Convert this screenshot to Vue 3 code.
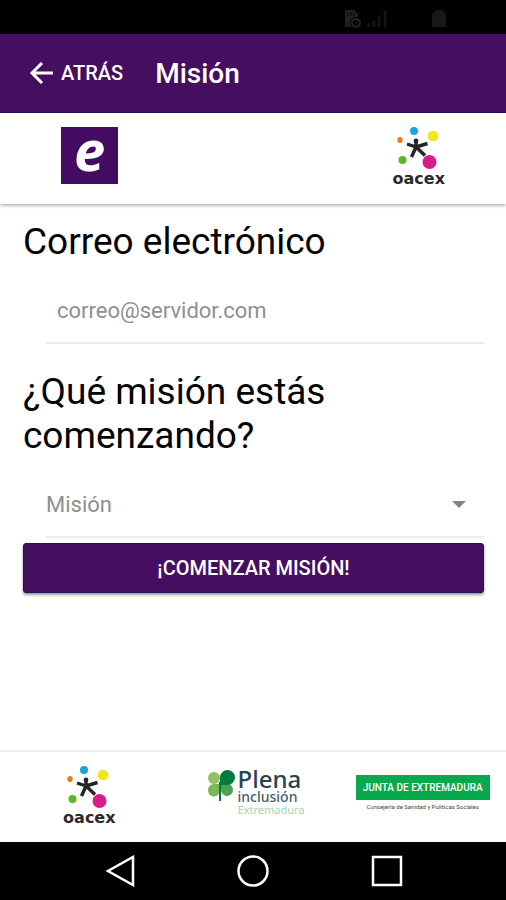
<script setup>
import {ref} from 'vue';

const correo = ref('')
const mision = ref('')
</script>

<template>
  <div class="screen">

    <!-- oacex star, shared by the top bar and the footer -->
    <svg class="defs" aria-hidden="true">
      <symbol id="oacex-mark" viewBox="0 0 44 44">
        <circle cx="17" cy="6" r="4" fill="#1ba3df" />
        <circle cx="36" cy="11" r="5.300" fill="#f0e61a" />
        <ellipse cx="3" cy="15" rx="2.700" ry="3" fill="#ea7a1c" />
        <circle cx="5.500" cy="35" r="4" fill="#5cb61f" />
        <circle cx="32.500" cy="37" r="7" fill="#d91c8c" />
        <circle cx="19" cy="16" r="2.400" fill="#242424" />
        <path d="M19 16V24M19 22L10 19M19 22L30.500 18.500M19 22L14.500 32M19 22L28 30.500" fill="none" stroke="#242424" stroke-width="3.400" />
      </symbol>
    </svg>

    <div class="status">
      <svg width="106" height="20" viewBox="0 0 106 20" aria-hidden="true">
        <path d="M1 2H10L14 6V9A6 6 0 0 0 8 19H1Z" fill="#202020" />
        <path d="M4 4V8M7 4V8M10 4V8" stroke="#080808" />
        <circle cx="12" cy="15" r="4" fill="none" stroke="#242424" stroke-width="2" />
        <path d="M9 18L15 12" stroke="#242424" />
        <path d="M25 19V15M30 19V12M35 19V8M41 19V3" stroke="#131313" stroke-width="3" />
        <path d="M88 6L92 2H98L102 6V19H88Z" fill="#181818" />
      </svg>
    </div>

    <header class="toolbar">
      <button type="button" class="back">
        <svg width="24" height="24" viewBox="0 0 24 24" aria-hidden="true">
          <path d="M24 12H3M13 2L3 12L13 22" fill="none" stroke="currentColor" stroke-width="3" />
        </svg>
        <span>ATRÁS</span>
      </button>
      <h1>Misión</h1>
    </header>

    <div class="logos">
      <div class="e-logo">e</div>
      <div class="oacex">
        <svg width="44" height="44" aria-hidden="true"><use href="#oacex-mark" /></svg>
        <span>oacex</span>
      </div>
    </div>

    <main>
      <form @submit.prevent>
        <label class="title" for="correo">Correo electrónico</label>
        <div class="field">
          <input id="correo" v-model="correo" type="email" placeholder="correo@servidor.com">
        </div>

        <label class="title" for="mision">¿Qué misión estás comenzando?</label>
        <div class="field">
          <select id="mision" v-model="mision">
            <option value="">Misión</option>
          </select>
          <svg class="arrow" width="14" height="7" viewBox="0 0 14 7" aria-hidden="true">
            <path d="M0 0H14L7 7Z" fill="#858585" />
          </svg>
        </div>

        <button type="submit" class="start">¡COMENZAR MISIÓN!</button>
      </form>
    </main>

    <footer>
      <div class="oacex">
        <svg width="44" height="44" aria-hidden="true"><use href="#oacex-mark" /></svg>
        <span>oacex</span>
      </div>
      <div class="plena">
        <svg width="28" height="34" viewBox="0 0 28 34" aria-hidden="true">
          <circle cx="6" cy="10" r="6" fill="#8cc463" />
          <path d="M0 22A6 6 0 0 1 6 16H12V23A6 6 0 0 1 0 22Z" fill="#79b852" />
          <path d="M13 16H18A6 6 0 1 1 13 22Z" fill="#4fa052" />
          <path d="M12 17V9.500A7.500 7.500 0 1 1 19.500 17Z" fill="#047a43" />
          <path d="M12 14V33" stroke="#047a43" stroke-width="2" />
        </svg>
        <div>
          <p class="plena-name">Plena</p>
          <p class="plena-sub">inclusión</p>
          <p class="plena-region">Extremadura</p>
        </div>
      </div>
      <div class="junta">
        <p class="junta-name">JUNTA DE EXTREMADURA</p>
        <p class="junta-dept">Consejería de Sanidad y Políticas Sociales</p>
      </div>
    </footer>

    <nav>
      <button type="button" aria-label="Atrás">
        <svg width="32" height="32" viewBox="0 0 32 32">
          <path d="M30 2V30L5 16Z" fill="none" stroke="#fff" stroke-width="2.500" />
        </svg>
      </button>
      <button type="button" aria-label="Inicio">
        <svg width="32" height="32" viewBox="0 0 32 32">
          <circle cx="16" cy="16" r="14.500" fill="none" stroke="#fff" stroke-width="2.500" />
        </svg>
      </button>
      <button type="button" aria-label="Recientes">
        <svg width="32" height="32" viewBox="0 0 32 32">
          <path d="M2 2H30V30H2Z" fill="none" stroke="#fff" stroke-width="2.500" />
        </svg>
      </button>
    </nav>
  </div>
</template>

<style>
body{
  margin:0;
  background-color:#fff;
}
</style>

<style scoped>
*{
  box-sizing:border-box;
}
p, h1{
  margin:0;
}
button, input, select{
  font-family:inherit;
  border:0;
  padding:0;
  background:none;
}
svg{
  display:block;
  flex-shrink:0;
}
.screen{
  min-height:100vh;
  display:flex;
  flex-direction:column;
  font-family:Roboto, sans-serif;
  color:#000;
}
.defs{
  position:absolute;
  width:0;
  height:0;
}
.status{
  display:flex;
  justify-content:flex-end;
  align-items:flex-end;
  height:34px;
  padding:0 56px 6px 0;
  background-color:#000;
}
.toolbar{
  display:flex;
  align-items:center;
  gap:32px;
  height:79px;
  padding:0 29px;
  background-color:#460e61;
  border-bottom:1px solid #2b0b52;
  color:#fff;
}
.back{
  display:flex;
  align-items:center;
  gap:8px;
  color:#fff;
  font-size:20px;
  font-weight:500;
}
.toolbar h1{
  font-size:28px;
  font-weight:500;
}
.logos{
  display:flex;
  justify-content:space-between;
  align-items:flex-start;
  height:91px;
  padding:12px 61px 0;
  box-shadow:0 1px 4px rgba(0,0,0,0.4);
}
.e-logo{
  width:57px;
  height:57px;
  margin-top:2px;
  background-color:#440b62;
  color:#fff;
  font-family:"Open Sans", sans-serif;
  font-size:56px;
  font-weight:700;
  font-style:italic;
  line-height:44px;
  text-align:center;
}
.oacex{
  display:flex;
  flex-direction:column;
  align-items:center;
  gap:2px;
  color:#2a2a2a;
  font-family:"DejaVu Sans", sans-serif;
  font-size:16px;
  font-weight:700;
  line-height:16px;
}
main{
  flex:1;
  padding:16px 22px 0 23px;
}
.title{
  display:block;
  font-size:37px;
  line-height:44px;
}
.field{
  position:relative;
  height:80px;
  margin:0 0 26px 23px;
  padding-top:15px;
  border-bottom:2px solid #ececec;
}
.field input, .field select{
  display:block;
  width:100%;
  height:62px;
  font-size:22px;
  color:#8f8f8f;
  outline:none;
}
.field input{
  padding:0 11px;
}
.field input::placeholder{
  color:#8f8f8f;
}
.field select{
  appearance:none;
}
.arrow{
  position:absolute;
  right:18px;
  top:43px;
  pointer-events:none;
}
.field:has(select){
  margin-bottom:5px;
}
.start{
  display:block;
  width:100%;
  height:50px;
  border:1px solid #2b0b52;
  border-radius:3px;
  background-color:#460e61;
  box-shadow:0 2px 3px rgba(0,0,0,0.4);
  color:#fff;
  font-size:20px;
  font-weight:500;
}
footer{
  display:grid;
  grid-template-columns:repeat(3, 1fr);
  justify-items:center;
  align-items:start;
  height:92px;
  padding:12px 0 0 6px;
  border-top:2px solid #ededed;
}
.plena{
  display:flex;
  gap:2px;
  padding-top:4px;
  font-family:"Noto Sans", sans-serif;
}
.plena-name{
  color:#264451;
  font-size:24px;
  font-weight:500;
  line-height:22px;
}
.plena-sub{
  color:#48606b;
  font-size:14px;
  font-weight:500;
  line-height:14px;
}
.plena-region{
  color:#a5d6b5;
  font-size:11px;
  line-height:12px;
}
.junta{
  padding-top:11px;
  text-align:center;
}
.junta-name{
  width:134px;
  background-color:#08a94d;
  color:#fff;
  font-size:10px;
  font-weight:500;
  line-height:25px;
  white-space:nowrap;
}
.junta-dept{
  color:#444;
  font-size:6px;
  line-height:14px;
  white-space:nowrap;
}
nav{
  display:flex;
  justify-content:center;
  gap:102px;
  height:58px;
  background-color:#000;
}
</style>
